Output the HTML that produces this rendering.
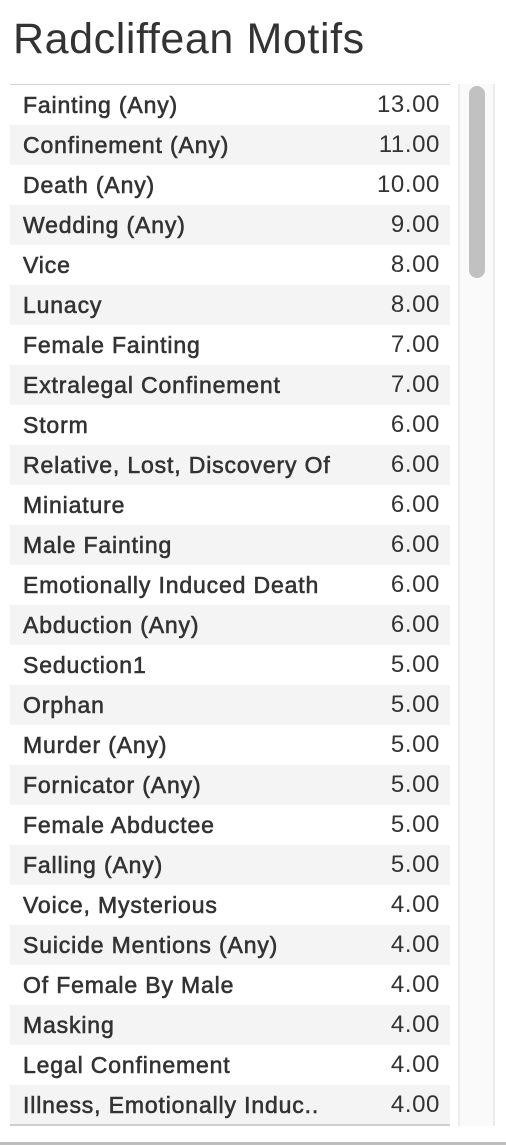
<!DOCTYPE html>
<html><head><meta charset="utf-8"><style>
body{margin:0;width:506px;height:1146px;background:#fff;position:relative;overflow:hidden;font-family:"Liberation Sans",sans-serif;color:#333}
.title{position:absolute;left:13px;top:13px;font-size:43px;font-weight:300;color:#333;letter-spacing:0.6px;line-height:52px}
.tbl{position:absolute;left:10px;top:84px;width:440px;border-top:1px solid #d4d4d4}
.r{height:40px;position:relative}
.r:nth-child(even){background:#f4f4f4}
.l{position:absolute;left:13px;top:7px;font-size:23px;letter-spacing:0.85px;-webkit-text-stroke:0.6px #333;white-space:nowrap;line-height:26px}
.v{position:absolute;right:10px;top:6px;font-size:24px;letter-spacing:0.6px;color:#333;line-height:27px}
.bt{position:absolute;left:10px;top:1124px;width:440px;height:2px;background:#cfcfcf}
.track{position:absolute;left:458px;top:84px;width:33px;height:1042px;background:#fafafa;border-left:2px solid #ececec;border-right:2px solid #ececec}
.thumb{position:absolute;left:469px;top:86px;width:16px;height:192px;background:#c1c1c1;border-radius:8px}
.bottom{position:absolute;left:0;top:1142px;width:506px;height:3px;background:#bdbdbd}
</style></head><body>
<div class="title">Radcliffean Motifs</div>
<div class="track"></div><div class="thumb"></div>
<div class="tbl">
<div class="r"><span class="l">Fainting (Any)</span><span class="v">13.00</span></div>
<div class="r"><span class="l">Confinement (Any)</span><span class="v">11.00</span></div>
<div class="r"><span class="l">Death (Any)</span><span class="v">10.00</span></div>
<div class="r"><span class="l">Wedding (Any)</span><span class="v">9.00</span></div>
<div class="r"><span class="l">Vice</span><span class="v">8.00</span></div>
<div class="r"><span class="l">Lunacy</span><span class="v">8.00</span></div>
<div class="r"><span class="l">Female Fainting</span><span class="v">7.00</span></div>
<div class="r"><span class="l">Extralegal Confinement</span><span class="v">7.00</span></div>
<div class="r"><span class="l">Storm</span><span class="v">6.00</span></div>
<div class="r"><span class="l">Relative, Lost, Discovery Of</span><span class="v">6.00</span></div>
<div class="r"><span class="l">Miniature</span><span class="v">6.00</span></div>
<div class="r"><span class="l">Male Fainting</span><span class="v">6.00</span></div>
<div class="r"><span class="l">Emotionally Induced Death</span><span class="v">6.00</span></div>
<div class="r"><span class="l">Abduction (Any)</span><span class="v">6.00</span></div>
<div class="r"><span class="l">Seduction1</span><span class="v">5.00</span></div>
<div class="r"><span class="l">Orphan</span><span class="v">5.00</span></div>
<div class="r"><span class="l">Murder (Any)</span><span class="v">5.00</span></div>
<div class="r"><span class="l">Fornicator (Any)</span><span class="v">5.00</span></div>
<div class="r"><span class="l">Female Abductee</span><span class="v">5.00</span></div>
<div class="r"><span class="l">Falling (Any)</span><span class="v">5.00</span></div>
<div class="r"><span class="l">Voice, Mysterious</span><span class="v">4.00</span></div>
<div class="r"><span class="l">Suicide Mentions (Any)</span><span class="v">4.00</span></div>
<div class="r"><span class="l">Of Female By Male</span><span class="v">4.00</span></div>
<div class="r"><span class="l">Masking</span><span class="v">4.00</span></div>
<div class="r"><span class="l">Legal Confinement</span><span class="v">4.00</span></div>
<div class="r"><span class="l">Illness, Emotionally Induc..</span><span class="v">4.00</span></div>
</div>
<div class="bt"></div>
<div class="bottom"></div>
</body></html>
